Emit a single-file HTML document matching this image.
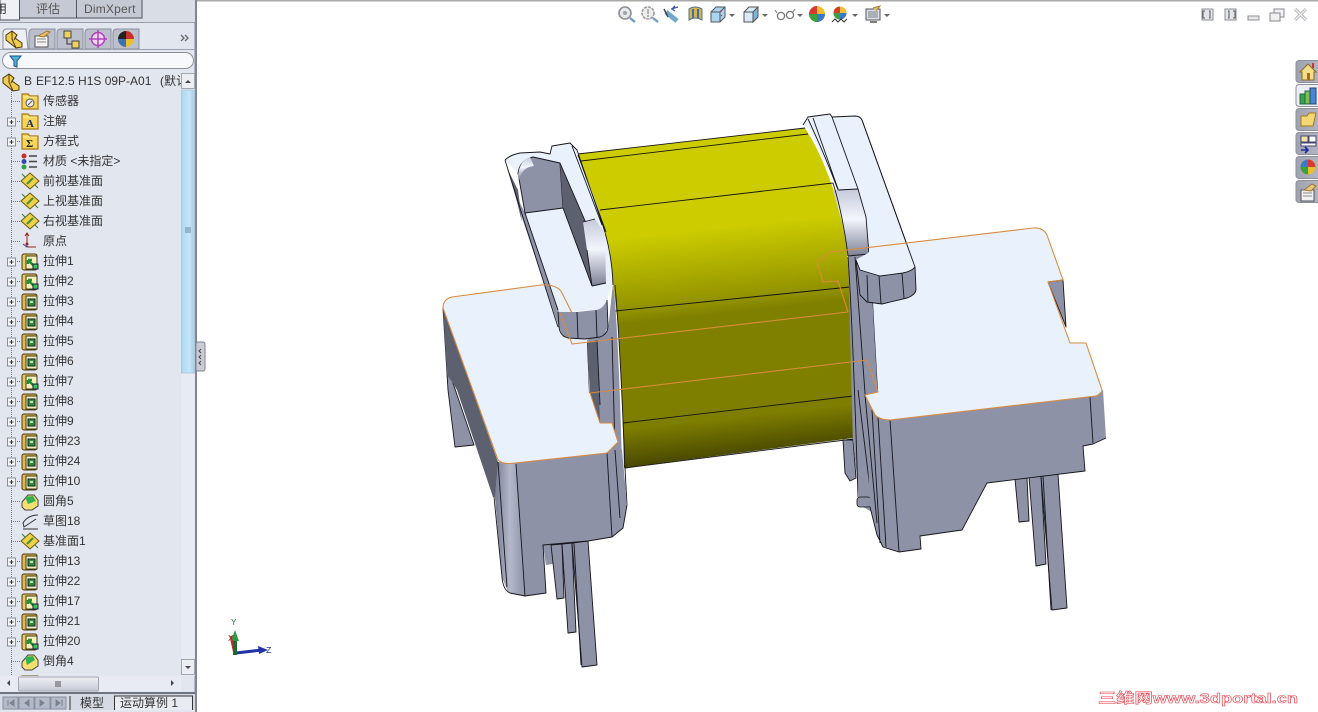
<!DOCTYPE html>
<html><head><meta charset="utf-8"><title>SolidWorks</title>
<style>
html,body{margin:0;padding:0;background:#fff;width:1318px;height:712px;overflow:hidden}
svg{display:block}
.t{font:12px "Liberation Sans","Noto Sans CJK SC",sans-serif;fill:#333}
.k{stroke:#15151c;stroke-width:.9;fill:none;stroke-linejoin:round}
.o{stroke:#d98b3f;stroke-width:1.1;fill:none;stroke-linejoin:round}
.g{fill:#8e92a7}.d{fill:#5d606f}.w{fill:#e9f2fc}
</style></head><body>
<svg width="1318" height="712" viewBox="0 0 1318 712" xmlns="http://www.w3.org/2000/svg">
<defs>
<linearGradient id="body" gradientUnits="userSpaceOnUse" x1="712" y1="140" x2="747" y2="465">
<stop offset="0" stop-color="#cccc00"/><stop offset=".27" stop-color="#cccc00"/><stop offset=".5" stop-color="#8f8f00"/><stop offset=".53" stop-color="#808000"/><stop offset=".85" stop-color="#7e7e00"/><stop offset="1" stop-color="#3a3a00"/></linearGradient>
<linearGradient id="gl" x1="0" y1="0" x2="0" y2="1"><stop offset="0" stop-color="#c5c9da"/><stop offset=".45" stop-color="#f3f6fd"/><stop offset="1" stop-color="#7c8094"/></linearGradient>
<linearGradient id="gh" x1="0" y1="0" x2="1" y2="0"><stop offset="0" stop-color="#777b90"/><stop offset=".5" stop-color="#b4b8ca"/><stop offset="1" stop-color="#8e92a7"/></linearGradient>
<linearGradient id="thumb" x1="0" y1="0" x2="1" y2="0"><stop offset="0" stop-color="#a9d8f2"/><stop offset=".6" stop-color="#c4e6f8"/><stop offset="1" stop-color="#a5cfe9"/></linearGradient>
<linearGradient id="hthumb" x1="0" y1="0" x2="0" y2="1"><stop offset="0" stop-color="#eef0f5"/><stop offset="1" stop-color="#c6cad4"/></linearGradient>
<linearGradient id="rt" x1="0" y1="0" x2="1" y2="0"><stop offset="0" stop-color="#9fa3b0"/><stop offset="1" stop-color="#b5b8c4"/></linearGradient>

<g id="a"><rect x="-8" y="-8" width="15" height="16" rx="2" fill="#e2b850" stroke="#4d3a10"/><rect x="-4" y="-6" width="11" height="13" fill="#f6ee b8" stroke="#3a3a20"/><rect x="-4" y="-6" width="11" height="13" fill="#f6eeb8" stroke="#3a3a20"/><rect x="-2" y="-3" width="7" height="7" fill="#2f8f3a" stroke="#123"/><rect x="0" y="-1" width="3" height="2" fill="#bfe6b0"/></g>
<g id="b"><rect x="-8" y="-8" width="15" height="16" rx="2" fill="#e9c860" stroke="#4d3a10"/><rect x="-4" y="-6" width="11" height="13" fill="#f8f0b8" stroke="#3a3a20"/><path d="M-2,-2 L5,5 M-2,-2 l4,0 M-2,-2 l0,4" stroke="#1f8f30" stroke-width="2.4" fill="none"/><rect x="3" y="2" width="5" height="5" fill="#43c050" stroke="#125"/></g>
<g id="plane"><path d="M0,-8 L9,0 L0,8 L-9,0 Z" fill="#eed24a" stroke="#6a5a10"/><path d="M-3,3 L3,-3" stroke="#4d8a30" stroke-width="2"/><path d="M-8,-7 L-5,-4 M5,4 L8,7" stroke="#3a7a30"/></g>
<g id="folder"><path d="M-8,-8 h6 l2,2 h8 v13 h-16 z" fill="#f5d65a" stroke="#a87612" stroke-width="1.2"/><path d="M-7,-5 h14" stroke="#fff0a8"/></g>
<g id="plus"><rect x="-4" y="-4" width="8" height="8" fill="#f6f7fa" stroke="#8a8e9c"/><path d="M-2,0 h4 M0,-2 v4" stroke="#333"/></g>
<g id="btn"><rect x="-5" y="-5" width="11" height="11" fill="#e4e5ea" stroke="#8d8f95"/></g>
</defs>

<rect width="1318" height="712" fill="#fff"/>
<rect x="197" y="0" width="1121" height="1.5" fill="#a9a9a9"/>

<!-- MODEL -->
<path class="g" d="M543,545 L546,565 L553,564 L551,545Z"/>
<path class="g k" d="M551,545 L557,599 L564,598 L562,544Z"/>
<path class="g k" d="M562,544 L568,633 L576,632 L572,543Z"/>
<path class="g k" d="M572,543 L582,667 L597,665 L588,541Z"/>
<path class="k" d="M574,543 L581,665"/>
<path class="g k" d="M1015,479 L1019,522 L1029,521 L1027,478Z"/>
<path class="g k" d="M1029,477 L1036,566 L1046,564 L1041,476Z"/>
<path class="g k" d="M1041,476 L1052,610 L1067,608 L1058,474Z"/>
<path class="k" d="M1043,476 L1051,610"/>

<path fill="url(#body)" d="M578,154 L805,128 Q832,170 845,235 Q851,270 853,438 L624,468 Q621,340 615,300 Q610,245 598,208 Z"/>
<path class="k" d="M578,154 L805,128 M581,161 L808,134 M600,210 L833,183 M615,311 L850,287 M623,423 L853,396 M625,468 L853,439"/>

<path class="g k" d="M443,308 L448,390 L455,447 L474,445 L453,383Z"/>
<path class="d" d="M443,308 L498,462 L498,497 L493,497 L457,390 L453,383 L447,375Z"/>
<path class="g" d="M587,340 L608,330 L613,283 Q618,320 622,465 L627,505 L623,528 L612,537 L600,440Z"/>
<path class="d" d="M587,343 L597,340 L600,423 L590,393Z"/>
<path class="k" d="M587,343 L589,393 M597,340 L600,405 M612,337 L615,450 M615,285 Q620,340 625,468 L627,505 M620,450 L621,518"/>
<path class="g k" d="M843,440 L845,473 L850,481 L856,478 L853,440Z"/>
<path class="g" d="M848,256 L869,254 L873,300 L880,400 L885,520 L860,505 L853,440Z"/>
<path class="k" d="M848,257 Q853,330 858,497 M855,257 L865,393 L877,523 M873,303 L878,392 M858,390 L871,497"/>
<rect x="857" y="497" width="14" height="10" rx="3" fill="#8e92a7" stroke="#15151c" stroke-width=".8"/>

<path class="w" d="M443,308 Q443,299 452,297 L541,285 Q555,284 561,291 L572,313 L587,343 L589,393 L600,423 L612,423 L618,442 L607,453 L515,463 Q503,465 498,460 Z"/>
<path class="g" d="M498,462 Q503,465 515,463 L607,453 L618,442 L622,450 L627,505 L623,528 L612,537 L588,541 L543,545 L546,593 L525,596 L508,592 L502,577 L495,497 Z"/>
<path fill="url(#gh)" d="M498,462 L516,464 L525,596 L508,592 L502,577 L495,497Z"/>
<path class="k" d="M494,497 L502,577 Q503,590 510,593 L525,596 L546,593 L543,545 L588,541 L612,537 L623,528 L627,505 M516,464 L525,596 M607,453 L612,537 M615,450 L620,518 M498,462 L507,587"/>

<!-- left clip -->
<path class="w" d="M505,160 Q510,155 520,153 L540,152 L550,154 L552,146 L570,143 L577,150 L600,217 L610,250 L613,283 L607,300 Q603,309 597,310 L563,312 L558,310 L525,213 L518,173 Z"/>
<path class="g" d="M507,168 L520,203 L525,213 L559,312 L559,327 L520,212 Z"/>
<path class="d" d="M507,168 L518,190 L520,205 L522,222 L514,190 Z"/>
<path class="k" d="M505,160 L520,208 L558,327 M505,160 Q510,155 520,153 L540,152 L550,154 L552,146 L570,143 L577,150 L600,217 Q612,250 613,285 M525,213 L558,310 M572,146 L602,225 M578,155 L606,232"/>
<path class="g" d="M518,173 Q520,160 533,157 L560,163 L563,208 L525,213 Z"/>
<path class="k" d="M518,173 Q520,160 533,157 L560,163 L563,208 L525,213 Z"/>
<path fill="url(#gl)" d="M518,175 Q520,160 530,157 L534,166 Q522,167 519,180Z"/>
<path class="d" d="M560,163 L586,223 L590,267 L592,286 L563,208Z"/>
<path class="k" d="M560,163 L586,223 L592,286 M563,208 L592,286"/>
<path fill="url(#gl)" d="M583,222 L595,219 L605,233 L606,283 L592,286 L587,250Z"/>
<path class="k" d="M583,222 L595,219 M592,286 L606,283 M587,250 L592,286"/>
<path class="g" d="M558,312 L559,327 L563,337 L585,339 L600,337 L608,328 L607,300 Q603,309 596,310 L577,312Z"/>
<path class="k" d="M558,312 L559,327 Q560,336 568,338 L585,339 L600,337 Q608,334 608,326 L607,300 M577,312 L578,338 M596,310 L597,338"/>

<!-- right clip -->
<path class="w" d="M803,125 L808,117 L830,114 L832,117 L855,116 Q860,116 862,120 L915,267 L903,273 L880,276 L860,270 L856,260 L868,253 L858,189 L838,190 L810,130Z"/>
<path class="k" d="M803,125 L808,117 L830,114 L832,117 L855,116 Q860,116 862,120 L915,267 M808,119 Q825,155 838,190 M813,118 L838,189 M832,117 L858,189"/>
<path fill="url(#gl)" d="M833,190 L858,189 L866,217 L869,254 L848,256 L842,222Z"/>
<path class="k" d="M838,190 L858,189 L866,217 L869,254 L848,256 M833,183 Q843,215 848,256"/>

<!-- right plate -->
<path class="w" d="M869,248 L1033,228 Q1043,227 1047,235 L1063,280 L1048,282 L1070,343 L1086,343 L1102,390 Q1102,394 1096,396 L890,420 Q880,420 875,415 L865,395 L878,392 L873,303 L869,254 Z"/>
<path class="g k" d="M1048,282 L1063,280 L1066,327Z"/>
<path class="g" d="M865,395 L875,415 Q882,420 890,420 L1096,396 L1103,390 L1106,438 L1093,444 L1083,446 L1085,471 L987,483 L962,530 L920,536 L921,549 L899,552 L883,547 L877,535 L870,507 Z"/>
<path class="k" d="M1106,438 L1093,444 L1083,446 L1085,471 L987,483 L962,530 L920,536 L921,549 L899,552 L883,547 L877,535 L870,507 M890,420 L899,552 M878,417 L886,547 M872,410 L880,543 M865,395 L877,523 M1090,397 L1093,443"/>
<path class="w" d="M856,260 L868,253 L880,240 L908,250 L915,267 Q912,271 903,273 L880,276 L860,270Z"/>
<path class="k" d="M862,120 L915,267"/>
<path class="g" d="M856,260 L860,270 L880,276 L903,273 Q912,271 915,267 L916,292 L907,298 L882,304 L867,302 L860,295Z"/>
<path class="k" d="M856,260 L860,295 L867,302 L882,304 L907,298 Q915,295 916,290 L915,267 Q912,271 903,273 L880,276 L860,270 L856,260 M867,275 L868,302 M879,276 L881,304 M902,273 L904,298"/>

<!-- orange -->
<path class="o" d="M560,313 L572,344 L848,312 L838,281 L823,282 L817,262 L830,252 L1033,228 Q1043,227 1047,235 L1063,280 L1048,282 L1070,343 L1086,343 L1102,390 Q1102,394 1096,396 L890,420 Q880,420 875,415 L865,395 L878,392 L867,360 L590,393 L600,423 L612,423 L618,442 L607,453 L515,463 Q503,465 498,460 L443,308 Q443,299 452,297 L541,285 Q555,284 561,291 L572,313"/>

<!-- triad -->
<g>
<path d="M235,654 L231,636" stroke="#b52a2a" stroke-width="3"/>
<path d="M236,653 L262,650" stroke="#2233a8" stroke-width="3"/><path d="M258,646 L268,650 L259,654Z" fill="#2233a8"/>
<path d="M235,655 V640" stroke="#1f6b2e" stroke-width="4"/><path d="M231,641 L235,630 L239,641Z" fill="#2f9a45"/>
<text x="231" y="625" font-family="Liberation Mono" font-size="9" fill="#2a7a3a">Y</text>
<text x="228" y="641" font-family="Liberation Mono" font-size="9" fill="#a33">X</text>
<text x="266" y="653" font-family="Liberation Mono" font-size="9" fill="#22339a">Z</text>
</g>

<!-- watermark -->
<text x="1098" y="703" textLength="200" lengthAdjust="spacingAndGlyphs" font-family="Liberation Sans,Noto Sans CJK SC,sans-serif" font-weight="bold" font-size="14" fill="#fff" stroke="#e4404c" stroke-width=".55">三维网www.3dportal.cn</text>

<!-- TOP TOOLBAR -->
<g fill="none">
<circle cx="625" cy="13" r="6" fill="#e8e8e8" stroke="#8a8f98" stroke-width="1.6"/><circle cx="625" cy="13" r="2" fill="#a0a4aa"/><path d="M630,18 L635,22" stroke="#6f9ac4" stroke-width="2.4"/>
<circle cx="648" cy="13" r="6" fill="#eee" stroke="#9a9a9a" stroke-width="1.6" stroke-dasharray="3 1"/><path d="M648,9 v5 M648,15 v2" stroke="#777"/><path d="M653,18 L658,22" stroke="#6f9ac4" stroke-width="2.4"/>
<path d="M666,12 L677,21" stroke="#6ea8cc" stroke-width="5"/><path d="M664,9 L668,17" stroke="#445" stroke-width="1.5"/><path d="M671,9 L678,7 M672,9 l3,-3 M672,9 l3,2" stroke="#3a5aa8" stroke-width="1.3"/>
<path d="M689,9 Q695,5 702,9 V20 Q695,16 689,20Z" fill="#d4b450" stroke="#5b6f85"/><path d="M693,9 V18 M698,9 V18" stroke="#40709a" stroke-width="2"/>
<path d="M711,12 L716,7 H725 V17 L720,22 H711Z" fill="#a9d4f2" stroke="#555"/><path d="M711,12 H720 V22 M720,12 L725,7" stroke="#555"/><path d="M722,11 l-2,0 M722,15 l-1,1" stroke="#c33"/>
<path d="M729,14 h6 l-3,3z" fill="#666"/>
<path d="M744,12 L749,7 H758 V17 L753,22 H744Z" fill="#d8eaf8" stroke="#555"/><path d="M753,12 V22 L758,17 V7 L753,12Z" fill="#7fb4dc" stroke="#555"/><path d="M744,12 H753" stroke="#555"/>
<path d="M762,14 h6 l-3,3z" fill="#666"/>
<circle cx="781" cy="16" r="3.6" stroke="#777" stroke-width="1.3"/><circle cx="790" cy="15" r="3.6" stroke="#777" stroke-width="1.3"/><path d="M777,13 l-2,-3 M793,12 l2,-3" stroke="#777"/>
<path d="M797,14 h6 l-3,3z" fill="#666"/>
<circle cx="817" cy="14" r="8" fill="#e8c030"/><path d="M817,14 V6 A8,8 0 0 0 809,14Z" fill="#d83a30"/><path d="M817,14 H809 A8,8 0 0 0 817,22Z" fill="#3ba13f"/><path d="M817,14 V22 A8,8 0 0 0 825,14Z" fill="#3b78c8"/>
<circle cx="840" cy="13" r="6.5" fill="#e8c030"/><path d="M840,13 V6.5 A6.5,6.5 0 0 0 833.5,13Z" fill="#d83a30"/><path d="M840,13 H833.5 A6.5,6.5 0 0 0 840,19.5Z" fill="#3ba13f"/><path d="M840,13 V19.5 A6.5,6.5 0 0 0 846.5,13Z" fill="#3b78c8"/>
<path d="M832,22 l3,-3 l3,3 l3,-3 l3,3 l3,-3" stroke="#333"/>
<path d="M852,14 h6 l-3,3z" fill="#666"/>
<rect x="866" y="9" width="14" height="11" fill="#dde" stroke="#555"/><rect x="868" y="11" width="10" height="7" fill="#a9b0b8"/><path d="M873,8 l7,-2 l-4,5" fill="#e8c070" stroke="#a78030"/><path d="M870,22 h7" stroke="#555" stroke-width="1.5"/>
<path d="M884,14 h6 l-3,3z" fill="#666"/>
</g>

<!-- top-right -->
<use href="#btn" x="1207" y="14"/><path d="M1205,11 h-2 v7 h2 M1209,11 h1 v7 h-1" fill="none" stroke="#555"/>
<use href="#btn" x="1230" y="14"/><path d="M1228,11 h1 v7 h-1 M1233,11 h2 v7 h-2" fill="none" stroke="#555"/>
<rect x="1248" y="16" width="11" height="4" fill="#e8e8ea" stroke="#8d8f95"/>
<rect x="1274" y="9" width="10" height="8" fill="#f0f0f2" stroke="#85878d"/><rect x="1270" y="13" width="10" height="8" fill="#f0f0f2" stroke="#85878d"/>
<path d="M1295,9 L1306,20 M1306,9 L1295,20" stroke="#a8aab0" stroke-width="3"/><path d="M1295,9 L1306,20 M1306,9 L1295,20" stroke="#f2f2f4" stroke-width="1.3"/>

<!-- right tabs -->
<g stroke="#8d909c">
<rect x="1296" y="60.5" width="26" height="22" rx="3" fill="url(#rt)"/>
<rect x="1296" y="84.5" width="26" height="22" rx="3" fill="#eceef3"/>
<rect x="1296" y="108.5" width="26" height="22" rx="3" fill="url(#rt)"/>
<rect x="1296" y="132.5" width="26" height="22" rx="3" fill="url(#rt)"/>
<rect x="1296" y="156.5" width="26" height="22" rx="3" fill="url(#rt)"/>
<rect x="1296" y="180.5" width="26" height="22" rx="3" fill="url(#rt)"/>
</g>
<path d="M1300,72 L1308,64 L1316,72 L1314,72 V80 H1302 V72Z" fill="#f3dc8a" stroke="#8a6a20"/><rect x="1307" y="73" width="3" height="7" fill="#a86a20"/><path d="M1313,63 v5" stroke="#c33" stroke-width="2"/>
<path d="M1300,94 h5 v10 h-5z" fill="#3aa04a" stroke="#264"/><path d="M1305,91 h5 v13 h-5z" fill="#7cc050" stroke="#264"/><path d="M1310,88 h6 v16 h-6z" fill="#4a86d8" stroke="#246"/>
<path d="M1301,116 h6 l2,-3 h7 l-3,13 h-12z" fill="#f3d873" stroke="#a87818"/>
<rect x="1301" y="136" width="7" height="6" fill="#f2e6a0" stroke="#447"/><rect x="1309" y="136" width="7" height="6" fill="#fff" stroke="#447"/><rect x="1301" y="143" width="15" height="3" fill="#fff" stroke="#447"/><path d="M1301,150 h7 m-3,-3 l3,3 l-3,3" stroke="#1a2a9a" stroke-width="1.6" fill="none"/>
<circle cx="1308" cy="167" r="7.5" fill="#e8c030"/><path d="M1308,167 V159.5 A7.5,7.5 0 0 0 1300.5,167Z" fill="#3b78c8"/><path d="M1308,167 V159.5 A7.5,7.5 0 0 1 1315.5,167Z" fill="#d83a30"/><path d="M1300.5,167 A7.5,7.5 0 0 0 1308,174.5 V167Z" fill="#3ba13f"/>
<rect x="1301" y="190" width="13" height="11" fill="#f2f2f2" stroke="#555"/><path d="M1303,193 h9 M1303,196 h9" stroke="#888"/><path d="M1304,190 l8,-6 l4,2 l-5,5z" fill="#e8c480" stroke="#a07830"/>

<!-- LEFT PANEL -->
<rect x="0" y="0" width="195" height="712" fill="#e2e6ef"/>
<rect x="194.5" y="0" width="2.5" height="712" fill="#7f8694"/>
<rect x="0" y="0" width="195" height="22" fill="#d9dde6"/>
<rect x="0" y="22" width="195" height="1" fill="#9aa0ac"/>
<rect x="0" y="-2" width="19.5" height="22" fill="#eef0f5" stroke="#50545e"/>
<rect x="19.5" y="-2" width="57" height="20" fill="#c5c9d4" stroke="#50545e"/>
<rect x="76.5" y="-2" width="65.5" height="20" fill="#c5c9d4" stroke="#50545e"/>
<text class="t" x="-5" y="13">用</text>
<text class="t" x="36" y="13" style="fill:#555">评估</text>
<text class="t" x="84" y="13" style="fill:#555;letter-spacing:.2px">DimXpert</text>

<!-- icon tabs -->
<g stroke="#8b8f9c">
<path d="M3,49 V33 Q3,29 7,29 H26 L28,49Z" fill="#eef0f5"/>
<path d="M29,49 V33 Q29,29 33,29 H55 V49Z" fill="#bcc0cd"/>
<path d="M57,49 V33 Q57,29 61,29 H83 V49Z" fill="#bcc0cd"/>
<path d="M85,49 V33 Q85,29 89,29 H111 V49Z" fill="#bcc0cd"/>
<path d="M113,49 V33 Q113,29 117,29 H139 V49Z" fill="#bcc0cd"/>
</g>
<rect x="0" y="49" width="194" height="1" fill="#9aa0ac"/>
<path d="M6,35 L12,31 L17,35 L15,38 L22,43 V47 L16,48 L6,40Z" fill="#f0cc50" stroke="#4a3a10"/><path d="M12,31 L12,39 L16,48 M17,35 L14,40" stroke="#4a3a10" fill="none"/>
<rect x="35" y="36" width="13" height="11" fill="#f4f4f4" stroke="#555"/><path d="M37,39 h9 M37,42 h9" stroke="#888"/><path d="M38,36 l9,-5 l3,1 l-6,5z" fill="#e8bd70" stroke="#a07830"/>
<rect x="64" y="31" width="7" height="7" fill="#f0d060" stroke="#444"/><rect x="72" y="41" width="7" height="7" fill="#f0d060" stroke="#444"/><path d="M67,38 V44 H72" stroke="#333" fill="none"/>
<circle cx="98" cy="39" r="6.5" fill="#f0d8f0" stroke="#b040c0" stroke-width="1.5"/><path d="M98,30 V48 M89,39 H107" stroke="#b040c0" stroke-width="1.5"/>
<circle cx="126" cy="39" r="8" fill="#e8c030"/><path d="M126,39 V31 A8,8 0 0 0 118,39Z" fill="#222"/><path d="M126,39 V31 A8,8 0 0 1 134,39Z" fill="#c8302c"/><path d="M118,39 A8,8 0 0 0 126,47 V39Z" fill="#3b70b8"/>
<path d="M181,35 l3,3 l-3,3 M185,35 l3,3 l-3,3" stroke="#666" stroke-width="1.3" fill="none"/>

<!-- filter -->
<rect x="2.5" y="52.5" width="191" height="16" rx="8" fill="#f7f8fb" stroke="#8d919c"/>
<path d="M10,56 H21 L17,61 V67 L14,66 V61Z" fill="#4fb0dc" stroke="#1f4f8a"/>

<!-- tree lines -->
<path d="M11.5,90 V685" stroke="#777" stroke-dasharray="1 1"/>
<g stroke="#777" stroke-dasharray="1 1">
<path d="M11,101.5 H21 M11,121.5 H21 M11,141.5 H21 M11,161.5 H21 M11,181.5 H21 M11,201.5 H21 M11,221.5 H21 M11,241.5 H21 M11,261.5 H21 M11,281.5 H21 M11,301.5 H21 M11,321.5 H21 M11,341.5 H21 M11,361.5 H21 M11,381.5 H21 M11,401.5 H21 M11,421.5 H21 M11,441.5 H21 M11,461.5 H21 M11,481.5 H21 M11,501.5 H21 M11,521.5 H21 M11,541.5 H21 M11,561.5 H21 M11,581.5 H21 M11,601.5 H21 M11,621.5 H21 M11,641.5 H21 M11,661.5 H21"/>
</g>
<use href="#plus" x="11.5" y="122"/><use href="#plus" x="11.5" y="142"/>
<use href="#plus" x="11.5" y="262"/><use href="#plus" x="11.5" y="282"/><use href="#plus" x="11.5" y="302"/><use href="#plus" x="11.5" y="322"/><use href="#plus" x="11.5" y="342"/><use href="#plus" x="11.5" y="362"/><use href="#plus" x="11.5" y="382"/><use href="#plus" x="11.5" y="402"/><use href="#plus" x="11.5" y="422"/><use href="#plus" x="11.5" y="442"/><use href="#plus" x="11.5" y="462"/><use href="#plus" x="11.5" y="482"/>
<use href="#plus" x="11.5" y="562"/><use href="#plus" x="11.5" y="582"/><use href="#plus" x="11.5" y="602"/><use href="#plus" x="11.5" y="622"/><use href="#plus" x="11.5" y="642"/>

<!-- tree icons -->
<path d="M3,78 L9,74 L14,78 L12,81 L19,86 V90 L13,91 L3,83Z" fill="#f0cc50" stroke="#4a3a10"/><path d="M9,74 L9,82 L13,91 M14,78 L11,83" stroke="#4a3a10" fill="none"/>
<use href="#folder" x="30" y="102"/><circle cx="30" cy="103" r="4" fill="#eee" stroke="#555"/><path d="M28,105 L32,101" stroke="#555"/>
<use href="#folder" x="30" y="122"/><text x="26" y="127" font-family="Liberation Serif" font-weight="bold" font-size="11" fill="#1a2a6a">A</text>
<use href="#folder" x="30" y="142"/><text x="26" y="147" font-family="Liberation Serif" font-weight="bold" font-size="11" fill="#222">Σ</text>
<circle cx="24" cy="156" r="2.5" fill="#c8302c"/><circle cx="24" cy="161.5" r="2.5" fill="#3048b0"/><circle cx="24" cy="167" r="2.5" fill="#30a040"/><path d="M29,156 h8 M29,161.5 h8 M29,167 h8" stroke="#444" stroke-width="1.5"/>
<use href="#plane" x="30" y="181"/><use href="#plane" x="30" y="201"/><use href="#plane" x="30" y="221"/>
<path d="M27,233 V247 H36" stroke="#a02020" fill="none"/><path d="M25,236 l2,-3 l2,3" stroke="#a02020" fill="none"/><path d="M23,244 l4,3" stroke="#2a3a9a"/><circle cx="27" cy="244" r="1.5" fill="#a02020"/>
<use href="#b" x="30" y="262"/><use href="#b" x="30" y="282"/><use href="#a" x="30" y="302"/><use href="#a" x="30" y="322"/><use href="#a" x="30" y="342"/><use href="#a" x="30" y="362"/><use href="#b" x="30" y="382"/><use href="#a" x="30" y="402"/><use href="#a" x="30" y="422"/><use href="#a" x="30" y="442"/><use href="#a" x="30" y="462"/><use href="#a" x="30" y="482"/>
<path d="M22,502 L28,495 H34 L38,500 V506 L32,510 H25 L22,507Z" fill="#f3e070" stroke="#444"/><path d="M25,497 L33,496 L36,501 L28,504Z" fill="#35b050"/>
<path d="M38,515 Q28,515 23,523 L24,527 L36,519 M23,529 H38" fill="none" stroke="#333"/>
<use href="#plane" x="30" y="541"/>
<use href="#a" x="30" y="562"/><use href="#a" x="30" y="582"/><use href="#b" x="30" y="602"/><use href="#a" x="30" y="622"/><use href="#b" x="30" y="642"/>
<path d="M22,662 L28,655 H34 L38,660 V666 L32,670 H25 L22,667Z" fill="#f3e070" stroke="#444"/><path d="M25,657 L33,656 L35,660 L27,665Z" fill="#35b050"/>
<path d="M22,681 V676 H38 V681" fill="#f0d060" stroke="#6a5a10"/>

<!-- tree text -->
<text class="t" x="24" y="85">B</text>
<text class="t" x="36" y="85">EF12.5 H1S 09P-A01</text>
<text class="t" x="160" y="85">(默认</text>
<text class="t" x="43" y="105">传感器</text>
<text class="t" x="43" y="125">注解</text>
<text class="t" x="43" y="145">方程式</text>
<text class="t" x="43" y="165">材质 &lt;未指定&gt;</text>
<text class="t" x="43" y="185">前视基准面</text>
<text class="t" x="43" y="205">上视基准面</text>
<text class="t" x="43" y="225">右视基准面</text>
<text class="t" x="43" y="245">原点</text>
<text class="t" x="43" y="265">拉伸1</text>
<text class="t" x="43" y="285">拉伸2</text>
<text class="t" x="43" y="305">拉伸3</text>
<text class="t" x="43" y="325">拉伸4</text>
<text class="t" x="43" y="345">拉伸5</text>
<text class="t" x="43" y="365">拉伸6</text>
<text class="t" x="43" y="385">拉伸7</text>
<text class="t" x="43" y="405">拉伸8</text>
<text class="t" x="43" y="425">拉伸9</text>
<text class="t" x="43" y="445">拉伸23</text>
<text class="t" x="43" y="465">拉伸24</text>
<text class="t" x="43" y="485">拉伸10</text>
<text class="t" x="43" y="505">圆角5</text>
<text class="t" x="43" y="525">草图18</text>
<text class="t" x="43" y="545">基准面1</text>
<text class="t" x="43" y="565">拉伸13</text>
<text class="t" x="43" y="585">拉伸22</text>
<text class="t" x="43" y="605">拉伸17</text>
<text class="t" x="43" y="625">拉伸21</text>
<text class="t" x="43" y="645">拉伸20</text>
<text class="t" x="43" y="665">倒角4</text>

<!-- vertical scrollbar -->
<rect x="181" y="73" width="14" height="603" fill="#e8ebf3"/>
<rect x="181.5" y="73.5" width="13" height="15" fill="#eceef3" stroke="#a2a6b0"/><path d="M185,83 h6 l-3,-3z" fill="#444"/>
<rect x="181.5" y="90" width="13" height="283" fill="url(#thumb)" stroke="#b3c8d8"/>
<path d="M185,228 h6 M185,230 h6 M185,232 h6" stroke="#6b8aa0"/>
<rect x="181.5" y="659.5" width="13" height="15" fill="#eceef3" stroke="#a2a6b0"/><path d="M185,666 h6 l-3,3z" fill="#444"/>
<!-- horizontal scrollbar -->
<rect x="0" y="676" width="181" height="16" fill="#e8ebf3"/>
<path d="M10,680 v6 l-3,-3z" fill="#444"/><path d="M171,680 v6 l3,-3z" fill="#444"/>
<rect x="18.5" y="677" width="80" height="14" rx="1" fill="url(#hthumb)" stroke="#a2a6b0"/>
<path d="M56,681 v6 M58,681 v6 M60,681 v6" stroke="#555"/>
<!-- bottom tabs -->
<rect x="0" y="692" width="195" height="20" fill="#d5d9e3"/>
<rect x="0" y="692" width="195" height="2" fill="#6e7480"/>
<g fill="#b4bac8" stroke="#8a909e"><rect x="3" y="697" width="15" height="12"/><rect x="19" y="697" width="15" height="12"/><rect x="35" y="697" width="15" height="12"/><rect x="51" y="697" width="15" height="12"/></g>
<path d="M8,700 v6 M14,700 l-4,3 l4,3z M29,700 l-4,3 l4,3z M40,700 l4,3 l-4,3z M56,700 l4,3 l-4,3z M62,700 v6" stroke="#7c8290" fill="#7c8290"/>
<path d="M70,696 V710" stroke="#333"/>
<text class="t" x="80" y="707">模型</text>
<path d="M114.5,710 V696 H192.5 V710" fill="#e8ebf2" stroke="#333"/>
<text class="t" x="120" y="707">运动算例 1</text>
<rect x="0" y="710" width="195" height="2" fill="#e2e6ef"/>

<!-- collapse handle -->
<rect x="196" y="342" width="9" height="29" rx="2" fill="#c9ccd6" stroke="#7f8694"/>
<path d="M201,349 l-2,2 l2,2 M201,355 l-2,2 l2,2 M201,361 l-2,2 l2,2" stroke="#444" fill="none"/>
</svg>
</body></html>
